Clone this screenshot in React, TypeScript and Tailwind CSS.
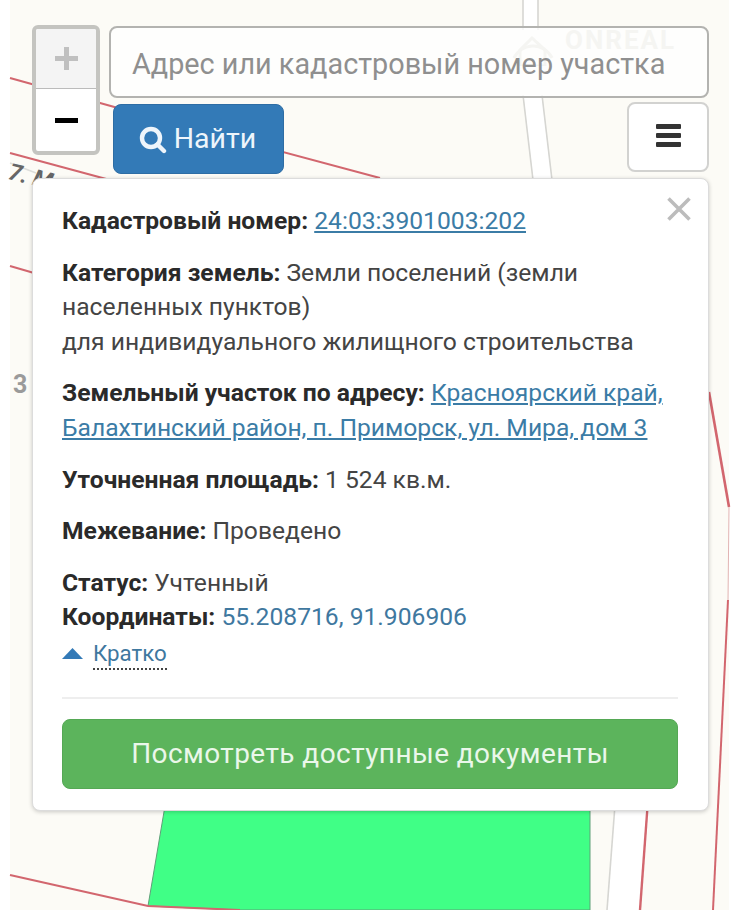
import React from "react";

function MapBg() {
  return (
    <svg className="absolute inset-0" width="740" height="910" viewBox="0 0 740 910">
      <rect x="0" y="0" width="740" height="910" fill="#ffffff" />
      <rect x="10" y="0" width="719" height="910" fill="#fcfbf6" />
      <polygon points="166,800 590,800 590,910 240,910 148,906" fill="#40ff86" stroke="#5f9f78" strokeWidth="1" />
      <polygon points="523,0 538,0 538,30 523,30" fill="#ffffff" />
      <polygon points="523,95 542,95 552,180 533,180" fill="#ffffff" />
      <polygon points="615,805 650,805 640,910 607,910" fill="#ffffff" />
      <g fill="none" stroke="#d2666e" strokeWidth="2">
        <path d="M10 78 L118 108 L380 178" />
        <path d="M10 153 L110 180" />
        <path d="M10 266 L34 273" />
        <path d="M10 875 L148 906 L240 910" />
        <path d="M709 392 L729 507" strokeWidth="2.6" />
        <path d="M729 507 L728 600" stroke="#e2b4b4" strokeWidth="1" />
        <path d="M728 600 L713 910" />
        <path d="M648 800 L640 910" strokeWidth="2.4" />
      </g>
      <g fill="none" stroke="#d6d6d2" strokeWidth="1.6">
        <path d="M523 0 L523 30" />
        <path d="M538 0 L538 30" />
        <path d="M523 95 L533 180" />
        <path d="M542 95 L552 180" />
        <path d="M615 805 L607 910" />
      </g>
      <path d="M10 163 L36 173" stroke="#dededa" strokeWidth="1.5" />
    </svg>
  );
}

function B({ children }: { children: React.ReactNode }) {
  return <b className="font-bold text-[#2a2a2a]">{children}</b>;
}

function L({ children }: { children: React.ReactNode }) {
  return <a className="text-[#3b7ca6] underline">{children}</a>;
}

export default function App() {
  return (
    <div className="relative w-[740px] h-[910px] overflow-hidden bg-white font-['Roboto',sans-serif]">
      <MapBg />
      <span className="absolute left-[9px] top-[160px] text-[23px] font-bold italic text-[#666] leading-6 rotate-[14deg] origin-left">7. М</span>
      <span className="absolute left-[13px] top-[373px] text-[25px] font-bold text-[#9a9a9a] leading-6">3</span>

      <div className="relative flex flex-col pl-[32px] pr-[31px] pt-[25px]">
        <div className="flex items-start gap-[9px]">
          <div className="w-[68px] h-[130px] rounded-[6px] border-[4px] border-[#c4c4c0] bg-white flex flex-col overflow-hidden shrink-0">
            <div className="h-[60px] bg-[#f4f4f4] border-b border-[#bbb] flex items-center justify-center">
              <span className="block relative w-[23px] h-[23px]">
                <span className="absolute left-0 top-[9px] w-[23px] h-[5px] bg-[#c0c0c0]" />
                <span className="absolute left-[9px] top-0 w-[5px] h-[23px] bg-[#c0c0c0]" />
              </span>
            </div>
            <div className="flex-1 flex items-center justify-center">
              <span className="block w-[23px] h-[5px] bg-black" />
            </div>
          </div>

          <div className="flex-1 flex flex-col gap-[4px] mt-px">
            <div className="relative h-[72px] rounded-[8px] border-2 border-[#b3b3b0] bg-white/80 flex items-center pl-[21px] pt-[4px] text-[28.8px] leading-[30px] text-[#8f8f8f]">
              <svg className="absolute left-[397px] top-[0px]" width="50" height="38" viewBox="0 0 50 38" fill="none" stroke="#f5f5f2" strokeWidth="3">
                <path d="M6 30 A21 21 0 0 1 44 30" />
                <path d="M12 22 L24 10 L37 22 L37 38 L12 38 Z" />
              </svg>
              <span className="relative">Адрес или кадастровый номер участка</span>
              <span className="absolute left-[454px] top-[3px] text-[26px] leading-[18px] font-bold tracking-[2px] text-[#f5f5f2]">ONREAL</span>
            </div>
            <div className="flex items-start justify-between pl-[4px]">
              <div className="mt-[2px] w-[171px] h-[70px] rounded-[8px] bg-[#337ab7] border border-[#2e6da4] flex items-center justify-center gap-[7px] pt-[1px] pr-[2px] text-[28.5px] text-[#eef5fb]">
                <svg width="28" height="28" viewBox="0 0 28 28" fill="none" stroke="#eef5fb" strokeWidth="4.4" strokeLinecap="round">
                  <circle cx="12" cy="12" r="9" />
                  <path d="M18.5 18.5 L25 25" />
                </svg>
                <span>Найти</span>
              </div>
              <div className="w-[82px] h-[70px] rounded-[8px] border-2 border-[#d2d2d0] bg-white flex flex-col items-center justify-center gap-[4px] pb-[4px]">
                <span className="block w-[25px] h-[5px] rounded-[1px] bg-[#333]" />
                <span className="block w-[25px] h-[5px] rounded-[1px] bg-[#333]" />
                <span className="block w-[25px] h-[5px] rounded-[1px] bg-[#333]" />
              </div>
            </div>
          </div>
        </div>

        <div className="relative mt-[4px] w-[677px] h-[633px] rounded-[8px] bg-white border border-[#dcdcdc] shadow-[0_1px_4px_rgba(0,0,0,0.2)] pl-[29px] pr-[30px] pt-[25px] text-[24.65px] leading-[34.6px] text-[#444]">
          <svg className="absolute right-[17px] top-[18px]" width="24" height="24" viewBox="0 0 24 24" stroke="#bcbcbc" strokeWidth="3.6">
            <path d="M1.5 1.5 L22.5 22.5 M22.5 1.5 L1.5 22.5" />
          </svg>
          <p className="mb-[17px]"><B>Кадастровый номер:</B> <L>24:03:3901003:202</L></p>
          <p className="mb-[17px]"><B>Категория земель:</B> Земли поселений (земли<br />населенных пунктов)<br />для индивидуального жилищного строительства</p>
          <p className="mb-[17px]"><B>Земельный участок по адресу:</B> <L>Красноярский край,<br />Балахтинский район, п. Приморск, ул. Мира, дом 3</L></p>
          <p className="mb-[17px]"><B>Уточненная площадь:</B> 1 524 кв.м.</p>
          <p className="mb-[17px]"><B>Межевание:</B> Проведено</p>
          <p><B>Статус:</B> Учтенный</p>
          <p><B>Координаты:</B> <span className="text-[#3f789f]">55.208716, 91.906906</span></p>
          <p className="flex items-center gap-[10px] pt-[4px]">
            <svg width="21" height="12" viewBox="0 0 21 12"><path d="M10.5 0 L21 11 L0 11 Z" fill="#337ab7" /></svg>
            <span className="text-[22.3px] text-[#3f789f] border-b-2 border-dotted border-[#444] leading-[29px]">Кратко</span>
          </p>
          <div className="mt-[27px] border-t-2 border-[#eeeeee]" />
          <div className="mt-[20px] h-[70px] rounded-[8px] bg-[#5cb45c] border border-[#55a855] flex items-center justify-center text-[28px] tracking-[0.42px] text-[#eaf7ea]">
            Посмотреть доступные документы
          </div>
        </div>
      </div>
    </div>
  );
}
